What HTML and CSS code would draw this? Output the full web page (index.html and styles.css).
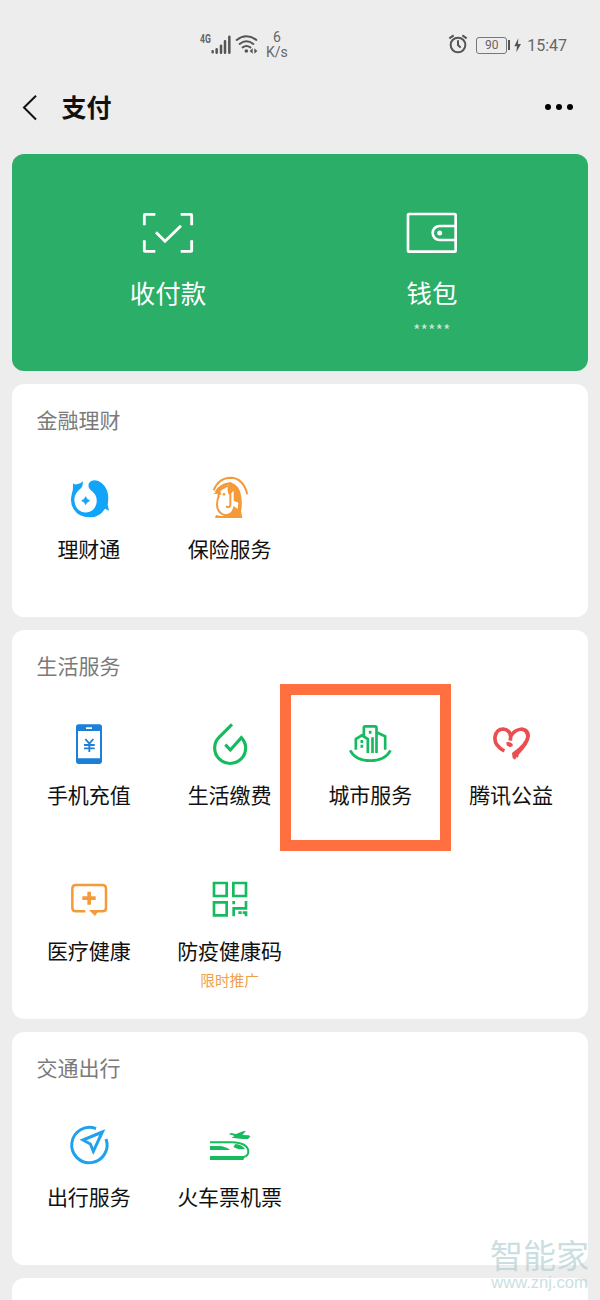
FILE: index.html
```html
<!DOCTYPE html>
<html lang="zh-CN">
<head>
<meta charset="utf-8">
<title>支付</title>
<link rel="stylesheet" href="styles.css">
</head>
<body>
<div class="screen">
  <header class="status">
    <div class="status-left">
      <span class="net">4G</span>
      <svg class="signal" viewBox="92 40 60 60"><path d="M97 92v3M109 86v10M122 75v21M134 62v34M147 48v48" stroke="#555" stroke-width="7.5" stroke-linecap="round"/></svg>
      <svg class="wifi" viewBox="165 40 69 60"><g fill="none" stroke="#555" stroke-width="6" stroke-linecap="round"><path d="M170 58Q199 36 229 58M179 70Q199 54 220 70M188 80Q199 72 211 80"/></g><circle cx="199" cy="91" r="5.500" fill="#555"/><path d="M218 83v16l-9-8zM223 83v16l9-8z" fill="#555"/></svg>
      <span class="speed">6<br>K/s</span>
    </div>
    <div class="status-right">
      <svg class="alarm" viewBox="57 43 60 60"><g fill="none" stroke="#555" stroke-width="6"><circle cx="87" cy="76" r="22"/><path d="M87 62v14l8 8M61 56l13-9M100 47l13 9"/></g></svg>
      <span class="battery">90</span><span class="cap"></span>
      <svg class="bolt" viewBox="254 52 21 45"><path d="M267 53L255 77h8l-2 18 14-25h-9z" fill="#555"/></svg>
      <span class="time">15:47</span>
    </div>
  </header>
  <nav class="nav">
    <svg class="back" viewBox="35 38 48 80"><path d="M77 43L41 78l36 36" fill="none" stroke="#111" stroke-width="6"/></svg>
    <h1 class="nav-title">支付</h1>
    <span class="more"><i class="dot"></i><i class="dot"></i><i class="dot"></i></span>
  </nav>
  <main class="cards">
    <section class="hero">
      <div class="hero-item">
        <svg class="hero-icon" viewBox="54 9 180 180"><g fill="none" stroke="#fff" stroke-width="8.500"><path d="M73 76V45q0-2 2-2h31M182 43h31q2 0 2 2v31M73 121v31q0 2 2 2h31M182 154h31q2 0 2-2v-31M108 97l27 27 48-47"/></g></svg>
        <span class="hero-label">收付款</span>
      </div>
      <div class="hero-item">
        <svg class="hero-icon" viewBox="36 9 180 180"><g fill="none" stroke="#fff" stroke-width="8"><rect x="54" y="42" width="143" height="113" rx="3"/><path d="M197 78h-48a21 21 0 0 0 0 42h48"/></g><circle cx="149" cy="99" r="7.500" fill="#fff"/></svg>
        <span class="hero-label">钱包</span>
        <span class="hero-note">*****</span>
      </div>
    </section>

    <section class="card">
      <h2 class="card-title">金融理财</h2>
      <div class="grid">
        <div class="item">
          <svg class="icon" viewBox="45 27 144 144"><path d="M69 55Q74 60 83 57Q94 55 98 49Q100 62 93 70Q76 82 73 101Q73 124 87 136Q99 145 112 142Q134 138 139 117Q144 94 128 80Q111 69 117 54Q124 42 145 48Q169 59 174 88Q176 104 173 119L177 137L165 131Q149 157 119 157Q86 157 71 133Q58 114 66 84Q70 74 69 55Z" fill="#12a4f8"/><path d="M107 95l4 7 8 5-8 5-4 7-4-7-8-5 8-5z" fill="#12a4f8" stroke="#12a4f8" stroke-width="2"/></svg>
          <span class="label">理财通</span>
        </div>
        <div class="item">
          <svg class="icon" viewBox="468 27 144 144"><g fill="none" stroke="#f49a39"><path d="M491 76Q505 39 542 38Q580 39 592 88" stroke-width="6"/><path d="M498 82Q512 58 541 56" stroke-width="8"/><path d="M507 92Q501 102 501 119Q502 145 526 151Q548 150 552 128M541 52V120Q539 130 528 124" stroke-width="6"/></g><path d="M541 52Q568 60 573 91Q578 118 573 138L577 159H495l3-9q14 4 28 2Q546 149 550 132V122L563 132L565 113L551 107V77L538 90Q530 80 534 67Q524 68 511 79L514 88L502 96L503 86L490 88L505 75Q520 60 541 61Z" fill="#f49a39"/><circle cx="522" cy="88" r="4" fill="#f49a39"/></svg>
          <span class="label">保险服务</span>
        </div>
      </div>
    </section>

    <section class="card card-life">
      <h2 class="card-title">生活服务</h2>
      <div class="grid">
        <div class="item">
          <svg class="icon" viewBox="105 210 144 144"><path fill-rule="evenodd" d="M146 223h62q8 0 8 8v102q0 9-8 9h-62q-8 0-8-9V231q0-8 8-8zm-2 20v82h66v-82zm24-11v5h18v-5z" fill="#1c7fda"/><path d="M166 267l12 14 12-14M178 281v25M162 285h32M162 295h32" fill="none" stroke="#1c7fda" stroke-width="5.500"/></svg>
          <span class="label">手机充值</span>
        </div>
        <div class="item">
          <svg class="icon" viewBox="528 210 144 144"><path d="M606 223L567 262Q554 275 554 294A46.500 46.500 0 0 0 647 294Q647 277 634 263L601 300L586 284" fill="none" stroke="#16bb60" stroke-width="9.500"/></svg>
          <span class="label">生活缴费</span>
        </div>
        <div class="item highlighted">
          <svg class="icon" viewBox="229.500 120 144 144"><g fill="none" stroke="#16bb60" stroke-width="8"><path d="M242 211Q258 242 302 242Q347 242 363 211M259 209V177L277 166L295 177V219M283 167V143q0-4 4-4h30q4 0 4 4V219M309 219V172M321 157L347 169V209"/></g><path d="M273 180h8v9h-8zM273 194h8v9h-8zM298 152h8v9h-8z" fill="#16bb60"/></svg>
          <span class="label">城市服务</span>
        </div>
        <div class="item">
          <svg class="icon" viewBox="651 120 144 144"><path d="M703 213Q672 196 675 171Q679 147 700 147Q718 149 722 168L721 182" fill="none" stroke="#ea4e50" stroke-width="11"/><path d="M709 187q10-4 19 5v6l-8 4-10-6z" fill="#ea4e50"/><path d="M719 162Q733 144 756 142Q780 145 780 169Q778 192 746 224L744 234L740 230L735 239L728 234L726 219Q766 190 768 171Q768 155 754 153Q740 153 729 168L722 177Z" fill="#ea4e50"/></svg>
          <span class="label">腾讯公益</span>
        </div>
        <div class="item">
          <svg class="icon" viewBox="105 18 144 144"><path d="M166 124H138Q127 124 127 113V56Q127 45 138 45H217Q228 45 228 56V113Q228 124 217 124H203" fill="none" stroke="#f49a39" stroke-width="7.500"/><path d="M177 120h31l-13 18zM172 65h11v14h14v11h-14v14h-11V90h-15V79h15z" fill="#f49a39"/></svg>
          <span class="label">医疗健康</span>
        </div>
        <div class="item">
          <svg class="icon" viewBox="528 18 144 144"><g fill="none" stroke="#16bb60" stroke-width="8"><path d="M552 39h38v39h-38zM610 39h38v39h-38zM552 97h38v39h-38zM611 139V115H648V93M611 93v10M625 128h10M638 128H652M648 125v14"/></g></svg>
          <span class="label">防疫健康码</span>
          <span class="promo">限时推广</span>
        </div>
      </div>
    </section>

    <section class="card">
      <h2 class="card-title">交通出行</h2>
      <div class="grid">
        <div class="item">
          <svg class="icon" viewBox="105 216 144 144"><g fill="none" stroke="#1fa2ee" stroke-width="9"><path d="M198 236A53 53 0 1 0 228 267"/><path d="M217 246L159 270L181 282L190 304Z"/></g></svg>
          <span class="label">出行服务</span>
        </div>
        <div class="item">
          <svg class="icon" viewBox="528 216 144 144"><path d="M540 277H606Q655 279 655 306Q655 318 638 322" fill="none" stroke="#16bb60" stroke-width="6"/><path d="M540 318H645L640 330H540ZM540 288H566Q588 289 600 300H540ZM610 291L616 282Q638 284 645 298H626ZM596 252L603 249L618 252L639 244L648 242L637 255L657 256L661 260L654 267H638L604 263L614 258Z" fill="#16bb60"/></svg>
          <span class="label">火车票机票</span>
        </div>
      </div>
    </section>

    <section class="card card-next"></section>
  </main>
  <div class="watermark"><span class="wm-name">智能家</span><span class="wm-url">www.znj.com</span></div>
</div>
</body>
</html>
```
FILE: styles.css
```css
*, *::after { box-sizing: border-box; }
body { margin: 0; }
.screen {
  position: relative;
  width: 600px;
  height: 1300px;
  overflow: hidden;
  background: #ededed;
  color: #111;
  font-family: "Noto Sans CJK SC", "Noto Sans", sans-serif;
}
.status {
  display: flex;
  justify-content: space-between;
  height: 90px;
  padding: 0 33px 0 200px;
  color: #666;
  font-family: Roboto, "Liberation Sans", sans-serif;
}
.status-left { display: flex; align-items: flex-start; padding-top: 30px; }
.net { width: 11px; margin-top: 3px; font: bold 12px/13px Roboto, sans-serif; transform: scaleX(.72); transform-origin: left; }
.signal { width: 20px; height: 20px; margin-top: 4px; }
.wifi { width: 23px; height: 20px; margin: 4px 0 0 4px; }
.speed { margin-left: 8px; font-size: 14px; line-height: 15px; text-align: center; }
.status-right { display: flex; align-items: center; }
.alarm { width: 20px; height: 20px; margin: 0 8px 2px 0; }
.battery { width: 31px; height: 17px; border: 1px solid #777; border-radius: 3px; font-size: 12px; line-height: 15px; text-align: center; }
.cap { width: 2px; height: 10px; margin: 0 4px 0 1px; background: #555; }
.bolt { width: 7px; height: 15px; margin-right: 6px; }
.time { font-size: 16px; }
.nav { display: flex; align-items: center; height: 34px; padding: 0 27px 0 21.5px; }
.back { width: 16px; height: 27px; }
.nav-title { flex: 1; margin: -3px 0 0 24px; font-size: 25px; line-height: 34px; font-weight: 700; }
.more { display: flex; gap: 5px; }
.dot { width: 6px; height: 6px; border-radius: 50%; background: #000; }
.cards { display: flex; flex-direction: column; gap: 13px; padding: 30px 12px 0; }
.hero {
  display: grid;
  grid-template-columns: 264px 264px;
  justify-content: center;
  height: 217px;
  padding-top: 49px;
  border-radius: 12px;
  background: #2bae67;
  color: #fff;
}
.hero-item { display: flex; flex-direction: column; align-items: center; }
.hero-icon { width: 60px; height: 60px; }
.hero-label { margin-top: 13px; font-size: 25.5px; line-height: 32px; }
.hero-note { margin-top: 13px; font: 15px/18px "Noto Sans CJK SC", sans-serif; letter-spacing: .5px; opacity: .75; }
.card { height: 233px; padding: 20px 6.5px 0; border-radius: 12px; background: #fff; }
.card-life { height: 389px; }
.card-next { height: 60px; }
.card-title { margin: 0 0 40px 18px; color: #7a7a7a; font-size: 21px; line-height: 30px; font-weight: 400; }
.grid { display: grid; grid-template-columns: repeat(4, 1fr); grid-auto-rows: 156px; }
.item { position: relative; display: flex; flex-direction: column; align-items: center; }
.icon { width: 48px; height: 48px; }
.label { margin-top: 11px; font-size: 21px; line-height: 30px; white-space: nowrap; }
.promo { margin-top: 5px; color: #f0a04b; font-size: 14.7px; line-height: 20px; }
.highlighted::after {
  content: "";
  position: absolute;
  left: -20px;
  top: -36px;
  width: 171px;
  height: 167px;
  border: 11px solid #ff6f3f;
}
.watermark {
  position: absolute;
  right: 11px;
  bottom: 9px;
  display: flex;
  flex-direction: column;
  align-items: center;
  color: #a9cbcd;
  opacity: .6;
}
.wm-name { font-size: 33px; line-height: 33px; }
.wm-url { margin-top: 2px; font: 16.5px/18px "Liberation Sans", sans-serif; }
```
